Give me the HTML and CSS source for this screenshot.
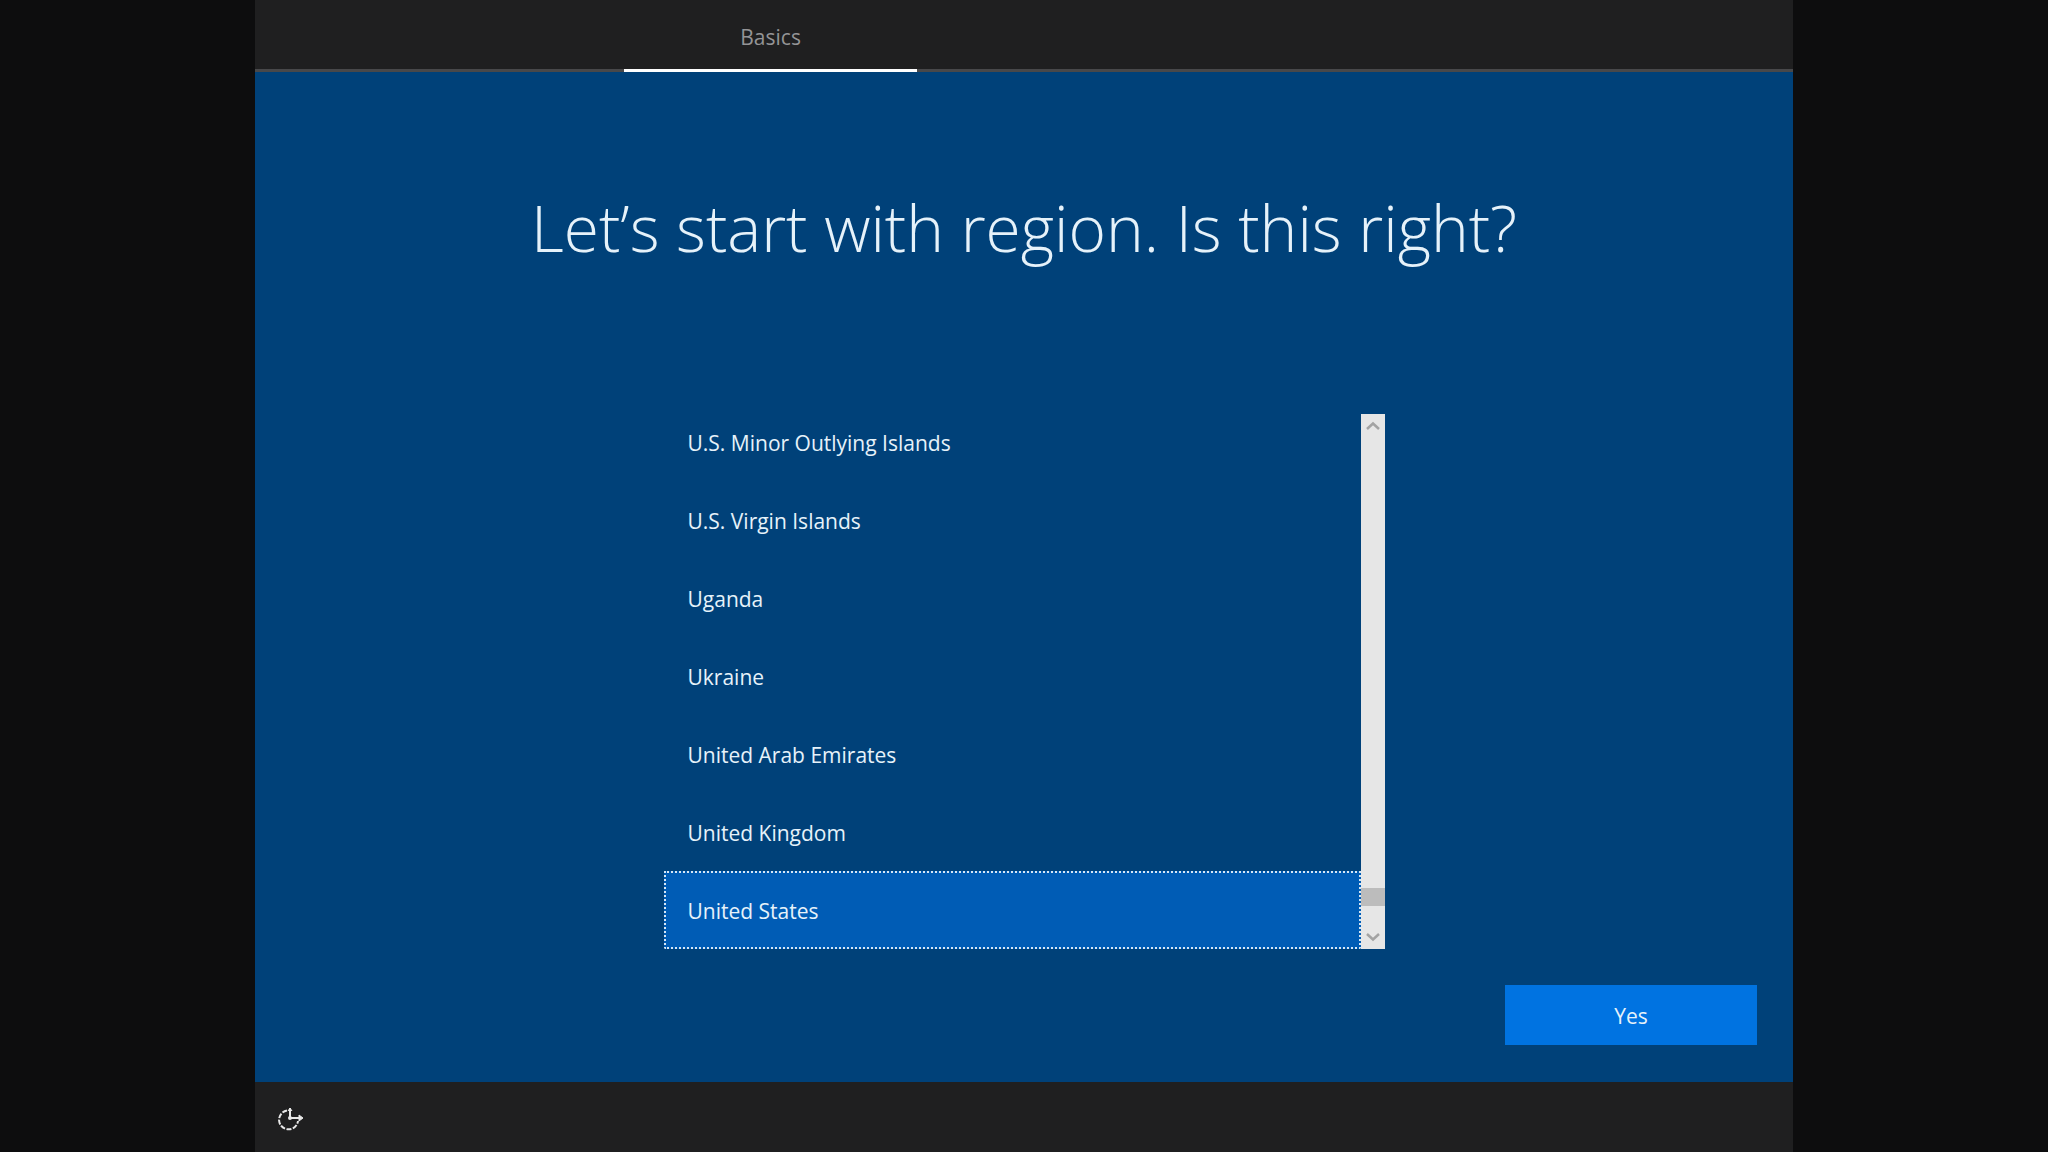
FILE: index.html
```html
<!DOCTYPE html>
<html lang="en">
<head>
    <meta charset="UTF-8">
    <meta name="viewport" content="width=device-width, initial-scale=1.0">
    <title>Basics</title>
    <link rel="stylesheet" href="styles.css">
</head>
<body>

    <div class="setup">
        <header class="top-bar">
            <div class="tab">Basics</div>
        </header>

        <main class="content">
            <h1 id="title">Let’s start with region. Is this right?</h1>

            <div class="region-list">
                <select class="regions" size="7" aria-labelledby="title">
                    <option>U.S. Minor Outlying Islands</option>
                    <option>U.S. Virgin Islands</option>
                    <option>Uganda</option>
                    <option>Ukraine</option>
                    <option>United Arab Emirates</option>
                    <option>United Kingdom</option>
                    <option selected>United States</option>
                </select>
                <div class="scrollbar">
                    <button class="arrow" aria-label="Scroll up">
                        <svg width="16" height="10" viewBox="0 0 16 10"><path d="M2 8L8 2.500L14 8" fill="none" stroke="#a3a3a3" stroke-width="2.500"/></svg>
                    </button>
                    <div class="thumb"></div>
                    <button class="arrow" aria-label="Scroll down">
                        <svg width="16" height="10" viewBox="0 0 16 10"><path d="M2 2L8 7.500L14 2" fill="none" stroke="#a3a3a3" stroke-width="2.500"/></svg>
                    </button>
                </div>
            </div>

            <div class="actions">
                <button class="btn">Yes</button>
            </div>
        </main>

        <footer class="bottom-bar">
            <button class="access" aria-label="Ease of Access">
                <svg width="26" height="24" viewBox="0 0 26 24" fill="none" stroke="#e8e8e8">
                    <path d="M9 3.500A9.500 9.500 0 1 0 20 14" stroke-width="2" stroke-dasharray="5 1.500"/>
                    <path d="M12 1V11H22" stroke-width="2"/>
                    <path d="M10 4L12 1L14 4M21 8L25 11L21 14Z" stroke-width="1" fill="#e8e8e8"/>
                    <circle cx="12" cy="11" r="2" fill="#e8e8e8" stroke="none"/>
                </svg>
            </button>
        </footer>
    </div>

</body>
</html>
```
FILE: styles.css
```css
* {
    box-sizing: border-box;
}
body {
    margin: 0;
    padding: 0 255px;
    background-color: #0d0d0e;
    font-family: "Open Sans", "Noto Sans", sans-serif;
    font-size: 21px;
    color: #e6f2fa;
}
button {
    font: inherit;
    color: inherit;
    border: none;
    padding: 0;
    background: none;
}
.setup {
    display: flex;
    flex-direction: column;
    min-height: 100vh;
    background-color: #004179;
}
.top-bar {
    display: flex;
    height: 72px;
    padding-left: 24%;
    background-color: #1f1f20;
    box-shadow: inset 0 -3px #48484a;
}
.tab {
    width: 293px;
    line-height: 74px;
    text-align: center;
    color: #949496;
    border-bottom: 3px solid #fff;
}
.content {
    flex: 1;
    display: flex;
    flex-direction: column;
    align-items: center;
    padding: 110px 36px 37px;
}
h1 {
    margin: 0 0 140px;
    font-size: 64px;
    font-weight: 300;
    line-height: 92px;
}
/* the list is cut at the top, as it is scrolled to its end */
.region-list {
    display: flex;
    align-items: flex-end;
    width: 721px;
    height: 535px;
    overflow: hidden;
}
.regions {
    flex: 1;
    height: 546px;
    padding: 0;
    border: none;
    outline: none;
    background: none;
    font: inherit;
    color: inherit;
    scrollbar-width: none;
}
.regions option {
    height: 78px;
    padding: 26px 24px 22px;
    color: #e6f2fa;
}
.regions option:checked {
    padding: 24px 22px 20px;
    border: 2px dotted #d5e6f5;
    background: linear-gradient(#005cb5, #005cb5);
    -webkit-text-fill-color: #e6f2fa;
}
.scrollbar {
    display: flex;
    flex-direction: column;
    width: 24px;
    height: 100%;
    background-color: #e6e6e6;
}
.arrow {
    height: 24px;
    line-height: 0;
}
.thumb {
    height: 18px;
    margin: auto 0 19px;
    background-color: #bcbcbc;
}
.actions {
    align-self: flex-end;
    margin-top: auto;
}
.btn {
    width: 252px;
    height: 60px;
    padding-top: 2px;
    background-color: #0073e1;
}
.bottom-bar {
    display: flex;
    align-items: center;
    height: 70px;
    padding: 4px 23px 0;
    background-color: #1f1f20;
}
.access {
    line-height: 0;
}
```
